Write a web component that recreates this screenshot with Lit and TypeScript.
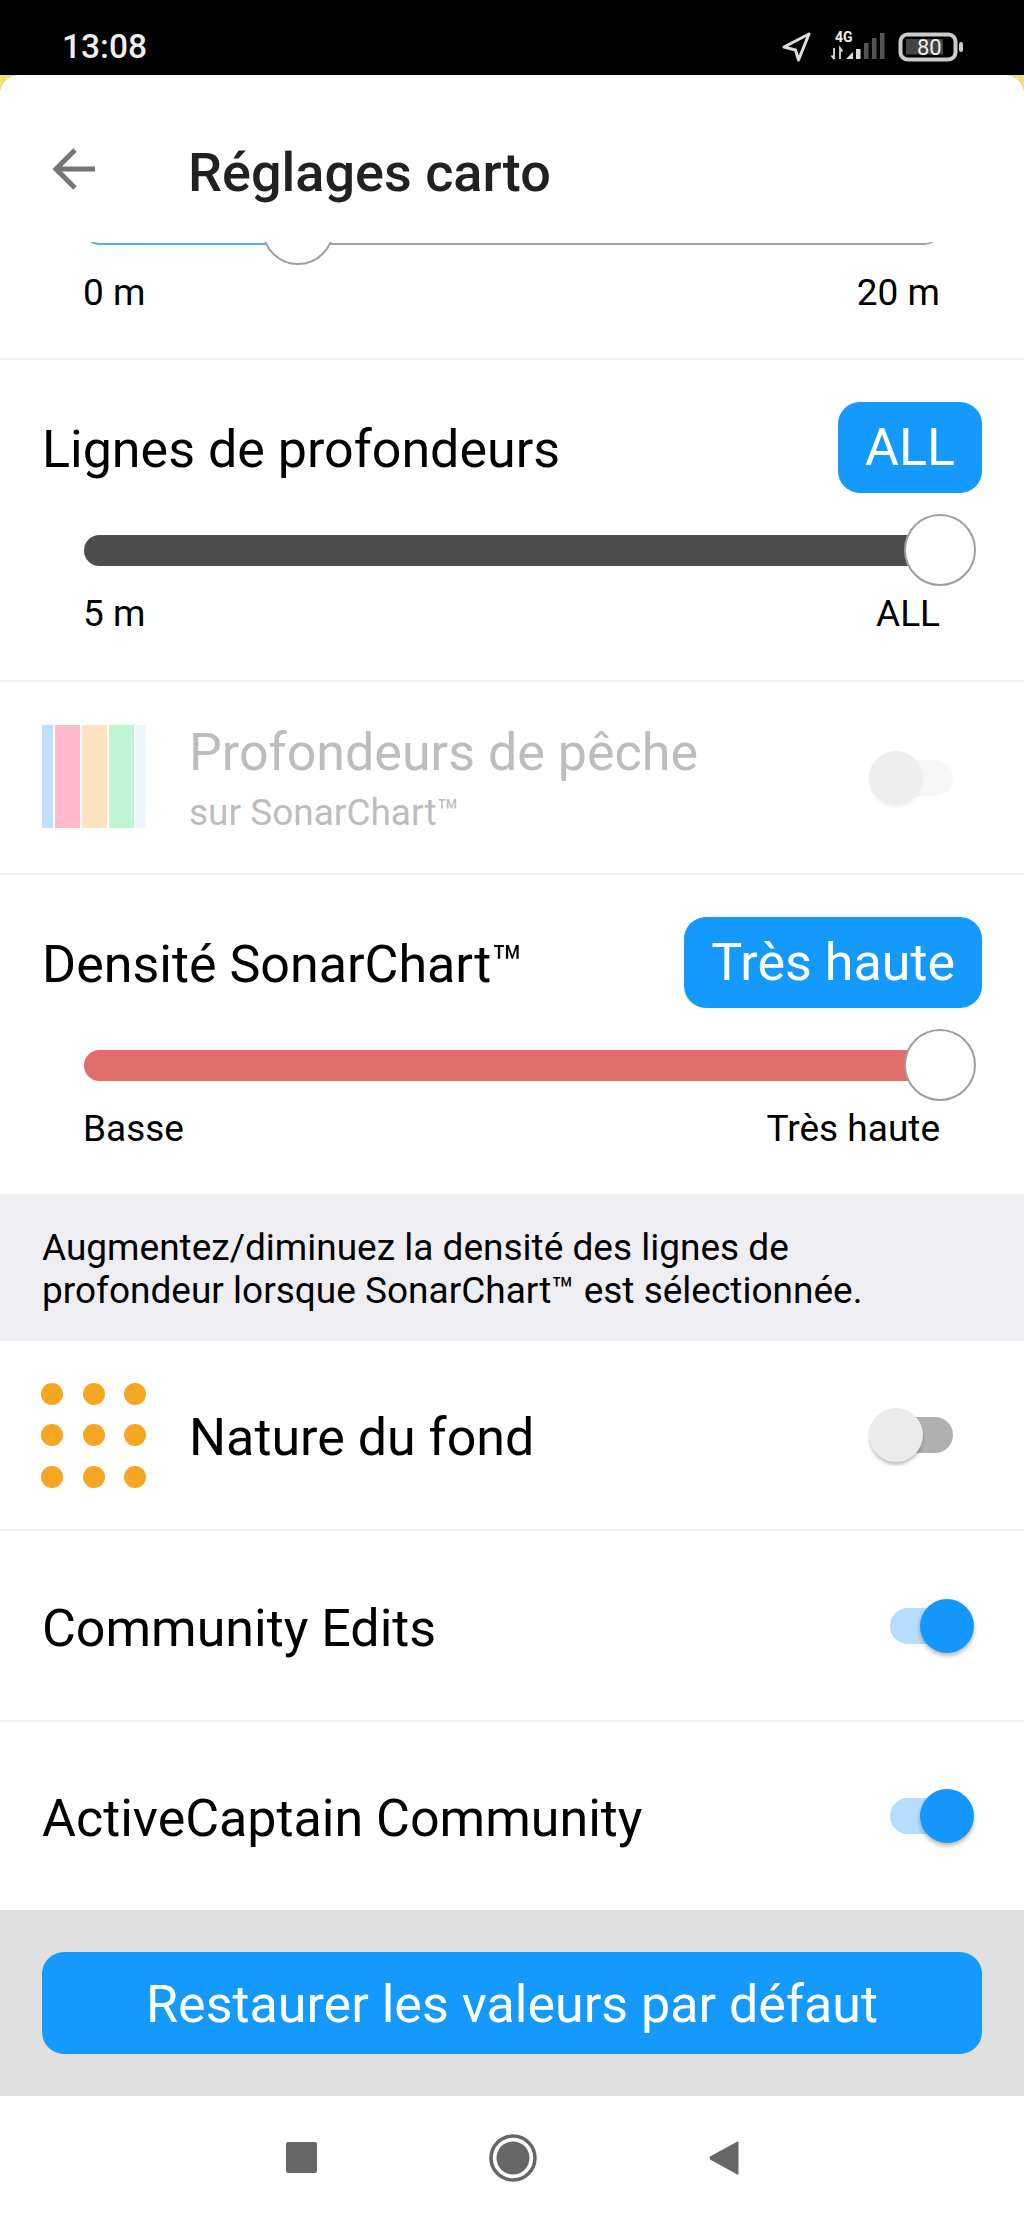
import { LitElement, html, css, svg } from "lit";
import { customElement } from "lit/decorators.js";

@customElement("app-root")
export class AppRoot extends LitElement {
  static styles = css`
    :host { display: block; width: 1024px; height: 2219px; overflow: hidden; background: #fff; font-family: Roboto, "Liberation Sans", sans-serif; color: #000; }
    .status { height: 75px; background: #000; display: flex; align-items: flex-start; padding: 0 60px 0 62px; box-sizing: border-box; }
    .time { color: #eee; font-size: 33.5px; font-weight: 500; line-height: 36px; margin-top: 29px; }
    .spacer { flex: 1; }
    .status-icons { display: block; margin-top: 28px; }
    .corner { background: #efe07a; }
    .card { background: #fff; border-radius: 20px 20px 0 0; display: flex; flex-direction: column; height: 2144px; overflow: hidden; }
    .header { height: 167px; flex: none; box-sizing: border-box; padding: 69px 0 0 51px; display: flex; align-items: flex-start; background: #fff; position: relative; z-index: 1; }
    .back { width: 46px; height: 50px; display: block; margin-right: 91px; }
    .title { font-size: 54px; font-weight: 500; line-height: 56px; color: #212121; margin-top: 1px; }
    .scroll { flex: 1; overflow: hidden; display: flex; flex-direction: column; }
    .sec { flex: none; box-sizing: border-box; border-bottom: 2.5px solid #f1f1f1; }
    .s1 { height: 118px; }
    .s1 .slider { margin-top: -49px; }
    .s2 { height: 322px; padding-top: 42px; }
    .s3 { height: 193px; }
    .s4 { height: 319px; padding-top: 42px; border-bottom: none; }
    .head { display: flex; justify-content: space-between; align-items: center; padding: 0 42px; height: 91px; }
    .head .lbl { margin-top: 5px; }
    .lbl { font-size: 52px; line-height: 56px; }
    .pill { height: 91px; padding: 0 27px; box-sizing: border-box; background: #149aff; color: #fff; border-radius: 22px; font-size: 52px; line-height: 91px; }
    .slider { position: relative; height: 72px; margin: 21px 84px 0 84px; }
    .rail { position: absolute; left: 0; right: 0; top: 20.5px; height: 31px; border-radius: 15.5px; box-sizing: border-box; }
    .rail.line { border-bottom: 2px solid #a3a3a3; background: #fff; }
    .rail.fill-line { border-bottom: 2px solid #4fb3e8; right: auto; background: transparent; }
    .thumb { position: absolute; top: 0; width: 72px; height: 72px; margin-left: -36px; box-sizing: border-box; border-radius: 50%; background: #fff; border: 2.5px solid #9e9e9e; }
    .ends { display: flex; justify-content: space-between; padding: 0 84px 0 83px; font-size: 37px; line-height: 42px; margin-top: 7px; }
    .row { display: flex; align-items: center; padding: 0 71px 0 42px; }
    .row .text { flex: 1; }
    .row .text.lbl { margin-top: 6px; }
    .with-icon { gap: 43px; }
    .col { margin-top: 3px; }
    .sub { font-size: 37px; line-height: 42px; margin-top: 11px; }
    .dim { color: #bdbdbd; }
    .stripes { display: flex; width: 104px; height: 103px; gap: 2px; flex: none; margin-bottom: 3px; }
    .stripes i { display: block; }
    .s-a { width: 11px; background: #bfe0fd; }
    .s-b { width: 25px; background: #ffb9cc; }
    .s-c { width: 25px; background: #ffe2bf; }
    .s-d { width: 25px; background: #bff5d5; }
    .s-e { width: 10px; background: #eaf6ff; }
    .toggle { position: relative; width: 84px; height: 54px; flex: none; }
    .tt { position: absolute; left: 21px; width: 63px; top: 9px; height: 36px; border-radius: 18px; background: #b0b0b0; }
    .tk { position: absolute; left: 0; top: 0; width: 54px; height: 54px; border-radius: 50%; background: #ebebeb; box-shadow: 0 3px 3px rgba(0,0,0,.22); }
    .toggle.on { margin-right: -21px; }
    .toggle.on .tt { left: 0; background: #b5ddff; }
    .toggle.on .tk { left: 30px; background: #1496ff; box-shadow: 0 3px 4px rgba(0,0,0,.28); }
    .toggle.dis .tt { background: #f7f7f7; }
    .toggle.dis .tk { background: #eee; box-shadow: 0 2px 3px rgba(0,0,0,.06); }
    .note { height: 147px; flex: none; background: #eeeef3; box-sizing: border-box; padding: 32px 42px 0; font-size: 37px; line-height: 43px; }
    .nature { height: 190px; }
    .dots { display: grid; grid-template-columns: repeat(3, 22px); grid-auto-rows: 22px; column-gap: 19.5px; row-gap: 19.5px; flex: none; width: 105px; margin-left: -1px; }
    .dots i { display: block; border-radius: 50%; background: #f5a623; }
    .rowh { height: 191px; }
    .last { height: 188px; border-bottom: none; }
    .foot { height: 186px; flex: none; background: #e0e0e0; padding: 42px; box-sizing: border-box; }
    .restore { height: 102px; background: #149aff; border-radius: 22px; color: #fff; font-size: 52px; line-height: 106px; text-align: center; }
    .nav { height: 123px; flex: none; background: #fff; display: flex; justify-content: center; align-items: center; gap: 172px; }
    .nav svg { display: block; }
  `;

  private statusIcons() {
    const bars: [number, number, string][] = [
      [856, 10, "#ddd"], [864, 16, "#555"], [872, 21, "#555"], [880, 26, "#555"],
    ];
    return html`<svg class="status-icons" width="182" height="40" viewBox="782 28 182 40">
      <path d="M809 34 L784 47 L795.5 50 L798.5 60 Z" fill="none" stroke="#ddd" stroke-width="3" stroke-linejoin="round"></path>
      <text x="835" y="42" font-family="Roboto, sans-serif" font-size="14" font-weight="700" fill="#eee">4G</text>
      <path d="M834 48 V59 M831.5 55.5 L834 59 M840 59 V48 L842.5 51.5" stroke="#ddd" stroke-width="1.8" fill="none"></path>
      <path d="M846 59 L853 52 V59 Z" fill="#ddd"></path>
      ${bars.map(([x, h, c]) => svg`<rect x=${x} y=${59 - h} width="4.5" height=${h} fill=${c}></rect>`)}
      <rect x="900.5" y="34.5" width="55" height="25" rx="7" fill="none" stroke="#ccc" stroke-width="4"></rect>
      <rect x="906" y="39" width="37" height="15.5" fill="#444"></rect>
      <text x="917" y="55" font-family="Roboto, sans-serif" font-size="22" fill="#eee">80</text>
      <rect x="959" y="42" width="4" height="10" rx="2" fill="#ccc"></rect>
    </svg>`;
  }

  private slider(pos: number, color: string | null, from: string, to: string) {
    const left = `${pos}px`;
    return html`
      <div class="slider">
        ${color
          ? html`<div class="rail" style="background:${color}"></div>`
          : html`<div class="rail line"></div><div class="rail fill-line" style="width:${left}"></div>`}
        <div class="thumb" style="left:${left}"></div>
      </div>
      <div class="ends"><span>${from}</span><span>${to}</span></div>`;
  }

  private toggle(cls: string) {
    return html`<div class="toggle ${cls}"><div class="tt"></div><div class="tk"></div></div>`;
  }

  render() {
    return html`
      <div class="status">
        <span class="time">13:08</span><span class="spacer"></span>${this.statusIcons()}
      </div>
      <div class="corner">
        <div class="card">
          <div class="header">
            <svg class="back" viewBox="0 0 46 50">
              <path d="M44 25 H6 M24 6 L5 25 L24 44" fill="none" stroke="#757575" stroke-width="5"></path>
            </svg>
            <div class="title">Réglages carto</div>
          </div>
          <div class="scroll">
            <section class="sec s1">${this.slider(214, null, "0 m", "20 m")}</section>
            <section class="sec s2">
              <div class="head"><span class="lbl">Lignes de profondeurs</span><span class="pill">ALL</span></div>
              ${this.slider(856, "#4d4d4d", "5 m", "ALL")}
            </section>
            <section class="sec s3 row with-icon">
              <div class="stripes"><i class="s-a"></i><i class="s-b"></i><i class="s-c"></i><i class="s-d"></i><i class="s-e"></i></div>
              <div class="text col"><div class="lbl dim">Profondeurs de pêche</div><div class="sub dim">sur SonarChart™</div></div>
              ${this.toggle("off dis")}
            </section>
            <section class="sec s4">
              <div class="head"><span class="lbl">Densité SonarChart™</span><span class="pill">Très haute</span></div>
              ${this.slider(856, "#e06c6c", "Basse", "Très haute")}
            </section>
            <div class="note">Augmentez/diminuez la densité des lignes de<br />profondeur lorsque SonarChart™ est sélectionnée.</div>
            <section class="sec nature row with-icon">
              <div class="dots">${Array.from({ length: 9 }, () => html`<i></i>`)}</div>
              <div class="text lbl">Nature du fond</div>
              ${this.toggle("off")}
            </section>
            <section class="sec rowh row">
              <div class="text lbl">Community Edits</div>
              ${this.toggle("on")}
            </section>
            <section class="sec last row">
              <div class="text lbl">ActiveCaptain Community</div>
              ${this.toggle("on")}
            </section>
            <div class="foot"><div class="restore">Restaurer les valeurs par défaut</div></div>
            <nav class="nav">
              <svg width="31" height="31" viewBox="0 0 31 31"><rect width="31" height="31" rx="2" fill="#666"></rect></svg>
              <svg width="48" height="48" viewBox="0 0 48 48"><circle cx="24" cy="24" r="22" fill="none" stroke="#666" stroke-width="3.5"></circle><circle cx="24" cy="24" r="16.5" fill="#666"></circle></svg>
              <svg width="30" height="34" viewBox="0 0 30 34"><path d="M29.5 1 V33 Q29 34 27.5 33 L1 18.5 Q0 17 1 15.5 L27.5 1 Q29 0 29.5 1 Z" fill="#666"></path></svg>
            </nav>
          </div>
        </div>
      </div>
    `;
  }
}
